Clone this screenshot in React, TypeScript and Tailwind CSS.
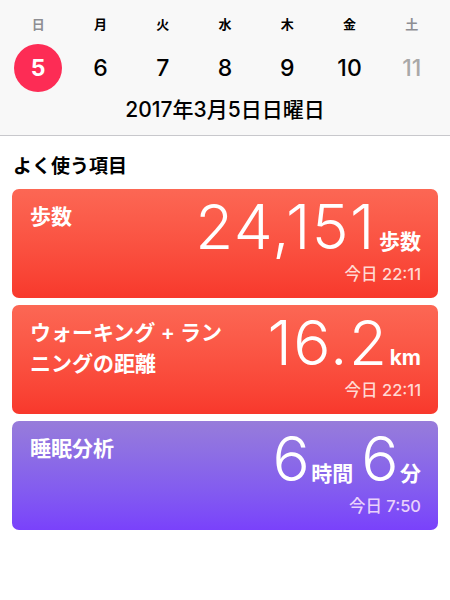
import React from 'react';

const days = [
  { label: '日', num: '5', today: true, muted: true },
  { label: '月', num: '6' },
  { label: '火', num: '7' },
  { label: '水', num: '8' },
  { label: '木', num: '9' },
  { label: '金', num: '10' },
  { label: '土', num: '11', muted: true, dim: true },
];

const Card: React.FC<{
  gradient: string;
  timeColor: string;
  title: React.ReactNode;
  value: React.ReactNode;
  time: string;
}> = ({ gradient, timeColor, title, value, time }) => (
  <div className={`flex h-[109px] justify-between rounded-[7px] pl-[18px] pr-[17px] text-white ${gradient}`}>
    <div className="pt-[12px] text-[21px] font-semibold leading-[31px]">{title}</div>
    <div className="flex flex-col items-end">
      <div className="flex items-baseline pt-[7px]">{value}</div>
      <div className={`mt-[6px] text-[16.5px] font-medium leading-[20px] ${timeColor}`}>{time}</div>
    </div>
  </div>
);

const Big: React.FC<{ children: React.ReactNode }> = ({ children }) => (
  <span className="text-[62px] font-[350] leading-none tracking-[1.5px]">{children}</span>
);

const Unit: React.FC<{ children: React.ReactNode; className?: string }> = ({ children, className = '' }) => (
  <span className={`text-[21px] font-bold leading-none ${className}`}>{children}</span>
);

export default function App() {
  return (
    <div className="min-h-[600px] w-[450px] bg-white font-[Inter,'Noto_Sans_CJK_JP',sans-serif] text-black">
      {/* Week header */}
      <div className="border-b border-[#c8c8cc] bg-[#f8f8f8] px-[7px] pb-[11px] pt-[14px]">
        <div className="grid grid-cols-7">
          {days.map((d) => (
            <div
              key={d.label}
              className={`text-center text-[13px] font-semibold leading-[20px] ${d.muted ? 'text-[#8e8e93]' : 'text-black'}`}
            >
              {d.label}
            </div>
          ))}
        </div>
        <div className="mt-[10px] grid grid-cols-7">
          {days.map((d) => (
            <div key={d.num} className="flex h-[48px] items-center justify-center">
              {d.today ? (
                <div className="flex h-[48px] w-[48px] items-center justify-center rounded-full bg-[#fd2c55] text-[23px] font-bold text-white">
                  {d.num}
                </div>
              ) : (
                <span className={`text-[23px] font-medium ${d.dim ? 'text-[#a8a8a8]' : 'text-black'}`}>{d.num}</span>
              )}
            </div>
          ))}
        </div>
        <div className="mt-[4px] text-center text-[21px] font-medium leading-[28px]">2017年3月5日日曜日</div>
      </div>

      {/* Favorites */}
      <div className="mb-[10px] mt-[19px] px-[13px] text-[19px] font-bold leading-[24px]">よく使う項目</div>
      <div className="flex flex-col gap-[7px] px-[12px]">
        <Card
          gradient="bg-gradient-to-b from-[#fc6754] to-[#f8382c]"
          timeColor="text-[#ffd9d3]"
          title="歩数"
          value={
            <>
              <Big>24,151</Big>
              <Unit className="ml-[3px]">歩数</Unit>
            </>
          }
          time="今日 22:11"
        />
        <Card
          gradient="bg-gradient-to-b from-[#fc6754] to-[#f8382c]"
          timeColor="text-[#ffd9d3]"
          title={
            <>
              ウォーキング + ラン
              <br />
              ニングの距離
            </>
          }
          value={
            <>
              <Big>16.2</Big>
              <Unit className="ml-[1px]">km</Unit>
            </>
          }
          time="今日 22:11"
        />
        <Card
          gradient="bg-gradient-to-b from-[#977cda] to-[#7a41fb]"
          timeColor="text-[#ead2fb]"
          title="睡眠分析"
          value={
            <>
              <Big>6</Big>
              <Unit>時間</Unit>
              <span className="w-[8px]" />
              <Big>6</Big>
              <Unit>分</Unit>
            </>
          }
          time="今日 7:50"
        />
      </div>
    </div>
  );
}
